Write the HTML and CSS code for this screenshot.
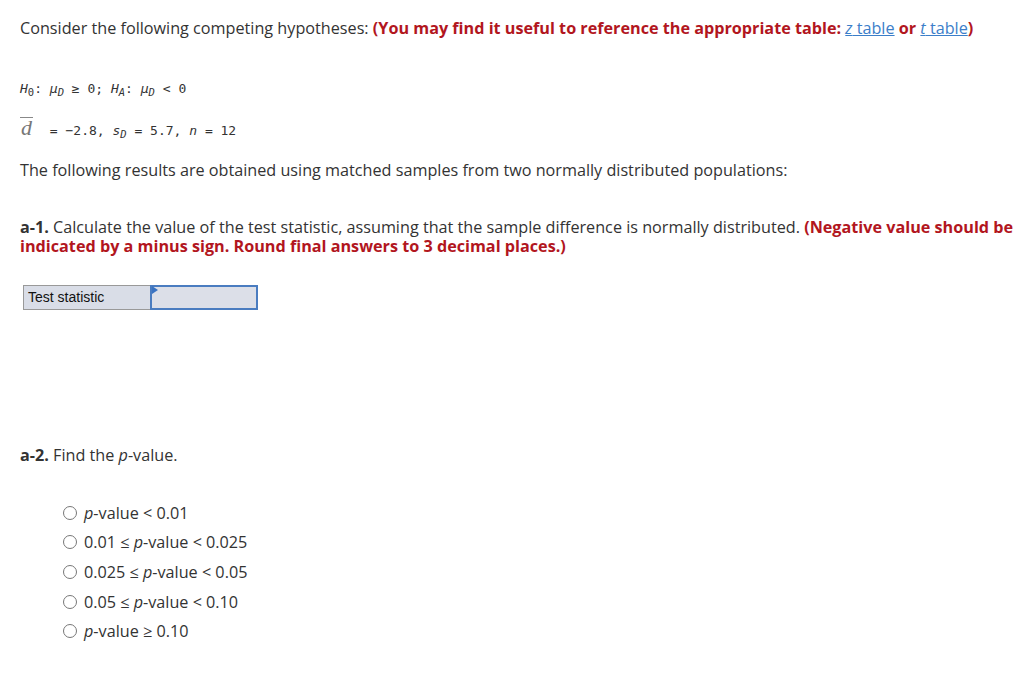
FILE: index.html
```html
<!DOCTYPE html>
<html>
<head>
<meta charset="utf-8">
<link rel="stylesheet" href="styles.css">
</head>
<body>
<div class="page">
  <p class="intro">Consider the following competing hypotheses: <b class="red">(You may find it useful to reference the appropriate table: <a class="lnk" href="#"><i>z</i> table</a> or <a class="lnk" href="#"><i>t</i> table</a>)</b></p>

  <p class="mono hyp"><i>H</i><sub>0</sub>: <i>μ</i><sub><i>D</i></sub> ≥ 0; <i>H</i><sub><i>A</i></sub>: <i>μ</i><sub><i>D</i></sub> &lt; 0</p>

  <p class="mono stats"><span class="dbar">d</span> = −2.8, <i>s</i><sub><i>D</i></sub> = 5.7, <i>n</i> = 12</p>

  <p class="body-text">The following results are obtained using matched samples from two normally distributed populations:</p>

  <p class="q a1"><b>a-1.</b> Calculate the value of the test statistic, assuming that the sample difference is normally distributed. <b class="red">(Negative value should be</b> <b class="red">indicated by a minus sign. Round final answers to 3 decimal places.)</b></p>

  <div class="ans">
    <div class="ans-label">Test statistic</div>
    <div class="ans-input"><span class="flag"></span></div>
  </div>

  <p class="q a2"><b>a-2.</b> Find the <i>p</i>-value.</p>

  <ul class="opts">
    <li><span class="radio"></span><span><i>p</i>-value &lt; 0.01</span></li>
    <li><span class="radio"></span><span>0.01 ≤ <i>p</i>-value &lt; 0.025</span></li>
    <li><span class="radio"></span><span>0.025 ≤ <i>p</i>-value &lt; 0.05</span></li>
    <li><span class="radio"></span><span>0.05 ≤ <i>p</i>-value &lt; 0.10</span></li>
    <li><span class="radio"></span><span><i>p</i>-value ≥ 0.10</span></li>
  </ul>
</div>
</body>
</html>
```
FILE: styles.css
```css
html, body {
  margin: 0;
  padding: 0;
  background: #fff;
}
.page {
  padding: 18px 0 0 20px;
  font-family: "Open Sans", "Noto Sans", sans-serif;
  font-size: 16.2px;
  color: #333;
}
p { margin: 0; }
.red { color: #b2161e; font-weight: 700; }
.lnk { color: #3b7ec9; font-weight: 400; text-decoration: underline; }
.intro { line-height: 21px; }
.mono {
  font-family: "DejaVu Sans Mono", monospace;
  font-size: 13px;
  color: #333;
}
.mono sub { font-size: 10.5px; vertical-align: -3px; }
.hyp { margin-top: 41px; line-height: 18px; }
.stats { margin-top: 16px; line-height: 26px; }
.dbar {
  display: inline-block;
  font-family: "Liberation Serif", serif;
  font-style: italic;
  font-size: 22px;
  line-height: 16px;
  padding: 2px 1px 0 1px;
  border-top: 1px solid #888;
  color: #777;
  margin-right: 9px;
}
.body-text { margin-top: 13px; line-height: 20px; }
.q { line-height: 19px; }
.a1 { margin-top: 38px; }
.ans {
  display: flex;
  margin: 29px 0 0 3px;
  width: 235px;
  height: 25px;
  font-family: "Liberation Sans", Arial, sans-serif;
  font-size: 14px;
  color: #111;
}
.ans-label {
  width: 122px;
  background: #d9dde7;
  border: 1px solid #999;
  border-right: none;
  padding-left: 4px;
  line-height: 23px;
}
.ans-input {
  position: relative;
  flex: 1;
  background: #dcdfe8;
  border: 2px solid #4a7cc0;
}
.flag {
  position: absolute;
  left: 0;
  top: -1px;
  width: 0;
  height: 0;
  border-top: 4px solid transparent;
  border-bottom: 4px solid transparent;
  border-left: 6px solid #3a73c2;
}
.a2 { margin-top: 136px; }
.opts {
  list-style: none;
  margin: 33px 0 0 43px;
  padding: 0;
}
.opts li {
  display: flex;
  align-items: center;
  height: 29.6px;
}
.radio {
  width: 14px;
  height: 14px;
  border: 1px solid #777;
  border-radius: 50%;
  margin-right: 7px;
  box-sizing: border-box;
}
```
